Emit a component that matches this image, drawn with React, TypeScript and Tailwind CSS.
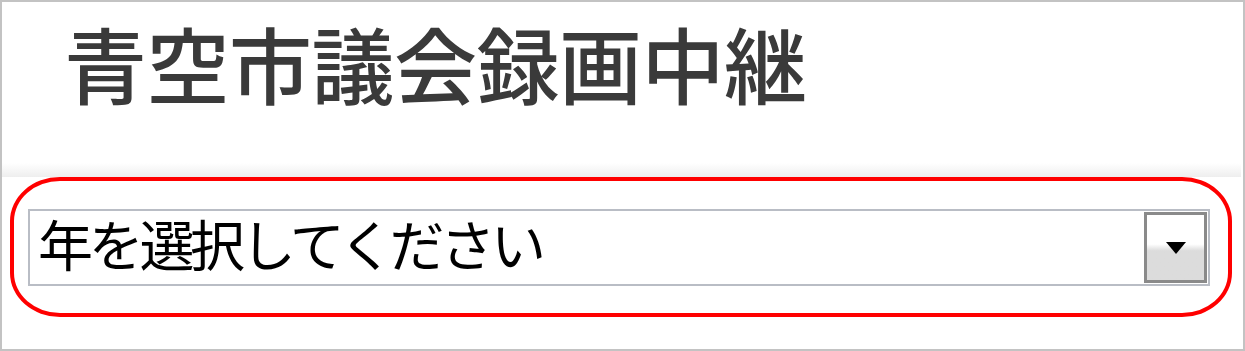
export default function App() {
  return (
    <div className="flex h-[351px] w-[1245px] flex-col border-2 border-[#c3c3c3] bg-white font-['Noto_Sans_CJK_JP',sans-serif]">
      <h1 className="ml-[62px] mt-[19px] h-[100px] text-[83px] font-medium leading-none tracking-[-0.5px] text-[#3a3a3a]">
        青空市議会録画中継
      </h1>
      <div className="mr-[2px] mt-[42px] h-[14px] bg-gradient-to-b from-white to-[#eeeeee]" />
      <div className="ml-[8px] h-[140px] w-[1222px] rounded-[50px/44px] border-4 border-[#ff0000] pl-[14px] pt-[28px]">
        <div className="flex h-[77px] w-[1182px] items-center border-2 border-[#b9bdc5] bg-white">
          <span className="flex-1 pb-[10px] pl-[8px] text-[55px] leading-none tracking-[-4.3px] text-black">
            年を選択してください
          </span>
          <div className="mr-[1px] flex h-[71px] w-[63px] items-center justify-center border-[3px] border-[#8a8a8a] bg-gradient-to-b from-white from-45% to-[#dcdcdc] to-55%">
            <svg width="20" height="12" viewBox="0 0 20 12">
              <path d="M0 0 H20 L10 12 Z" fill="#000" />
            </svg>
          </div>
        </div>
      </div>
    </div>
  )
}
